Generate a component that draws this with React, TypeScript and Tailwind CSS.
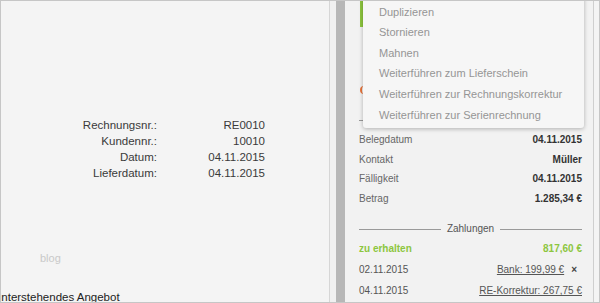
const info = [
  { label: "Rechnungsnr.:", value: "RE0010" },
  { label: "Kundennr.:", value: "10010" },
  { label: "Datum:", value: "04.11.2015" },
  { label: "Lieferdatum:", value: "04.11.2015" },
];

const menu = [
  "Duplizieren",
  "Stornieren",
  "Mahnen",
  "Weiterführen zum Lieferschein",
  "Weiterführen zur Rechnungskorrektur",
  "Weiterführen zur Serienrechnung",
];

const details = [
  { label: "Belegdatum", value: "04.11.2015" },
  { label: "Kontakt", value: "Müller" },
  { label: "Fälligkeit", value: "04.11.2015" },
  { label: "Betrag", value: "1.285,34 €" },
];

export default function App() {
  return (
    <div className="flex h-[303px] w-[600px] overflow-hidden border border-[#c6c6c6] bg-[#f4f4f4] font-['Liberation_Sans',Arial,sans-serif]">
      {/* document preview */}
      <div className="flex w-[329px] shrink-0 flex-col border-r border-[#d6d6d6] bg-[#f4f4f4] pt-[116px]">
        <div className="grid grid-cols-[156px_108px] text-[11.5px] leading-[16px] text-[#3a3a3a]">
          {info.map((row) => (
            <div key={row.label} className="contents">
              <span className="text-right">{row.label}</span>
              <span className="text-right">{row.value}</span>
            </div>
          ))}
        </div>
        <p className="mt-[70px] pl-[39px] text-[11px] leading-[14px] text-[#c9c9c9]">blog</p>
        <p className="ml-[-8px] mt-[25px] whitespace-nowrap text-[11.5px] leading-[14px] text-[#222]">
          Unterstehendes Angebot
        </p>
      </div>

      <div className="w-[6px] shrink-0 bg-[#f0f0f0]" />
      <div className="w-[9px] shrink-0 bg-[#b7b7b7]" />

      {/* side panel */}
      <div className="relative flex w-[249px] shrink-0 flex-col border-r border-[#cfcfcf] bg-[#f2f2f2] pl-[14px] pr-[11px] text-[10px]">
        <div className="ml-[1px] h-[26px] border-l-[3px] border-[#8dc63f]" />
        {/* status badge edge, mostly hidden by the menu */}
        <div className="ml-[1px] mt-[59px] h-[8px] w-[5px] rounded-l-full border-l-2 border-[#e8743b]" />
        <div className="mt-[26px] h-px bg-[#999]" />

        <div className="mt-[9px]">
          {details.map((row) => (
            <div key={row.label} className="flex justify-between leading-[19.5px]">
              <span className="text-[#666]">{row.label}</span>
              <span className="font-bold text-[#333]">{row.value}</span>
            </div>
          ))}
        </div>

        <div className="mt-[14px] flex items-center leading-[14px]">
          <div className="h-px flex-1 bg-[#9a9a9a]" />
          <span className="px-[6px] text-[#555]">Zahlungen</span>
          <div className="h-px flex-1 bg-[#9a9a9a]" />
        </div>

        <div className="mt-[2px] leading-[21px]">
          <div className="flex justify-between font-bold text-[#8dc63f]">
            <span>zu erhalten</span>
            <span>817,60 €</span>
          </div>
          <div className="flex justify-between text-[#555]">
            <span>02.11.2015</span>
            <span>
              <span className="underline">Bank: 199,99 €</span>
              <span className="ml-[7px] mr-[5px] font-bold text-[#444]">×</span>
            </span>
          </div>
          <div className="flex justify-between text-[#555]">
            <span>04.11.2015</span>
            <span className="underline">RE-Korrektur: 267,75 €</span>
          </div>
        </div>

        <div className="absolute left-[18px] top-[-4px] h-[131px] w-[221px] rounded-b-[3px] bg-[#f6f6f6] pl-[16px] pt-[4.7px] shadow-[0_1px_4px_rgba(0,0,0,0.28)]">
          {menu.map((item) => (
            <div key={item} className="whitespace-nowrap text-[11px] leading-[20.6px] text-[#959595]">
              {item}
            </div>
          ))}
        </div>
      </div>

      <div className="flex-1 bg-[#f4f4f4]" />
    </div>
  );
}
